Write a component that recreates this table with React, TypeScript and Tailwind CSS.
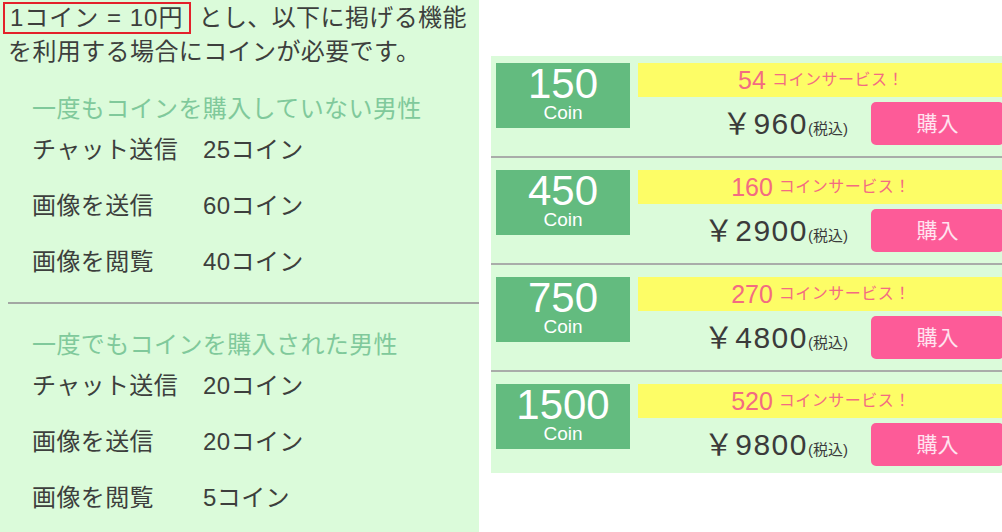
const font = "font-['Liberation_Sans','Noto_Sans_CJK_JP',sans-serif]";

type Cost = { label: string; value: string };

const neverBought: Cost[] = [
  { label: "チャット送信", value: "25コイン" },
  { label: "画像を送信", value: "60コイン" },
  { label: "画像を閲覧", value: "40コイン" },
];

const bought: Cost[] = [
  { label: "チャット送信", value: "20コイン" },
  { label: "画像を送信", value: "20コイン" },
  { label: "画像を閲覧", value: "5コイン" },
];

const plans = [
  { coin: "150", bonus: "54", price: "960" },
  { coin: "450", bonus: "160", price: "2900" },
  { coin: "750", bonus: "270", price: "4800" },
  { coin: "1500", bonus: "520", price: "9800" },
];

function CostRows({ rows }: { rows: Cost[] }) {
  return (
    <div>
      {rows.map((r) => (
        <div key={r.label} className="flex h-[56px] items-center pl-[32px]">
          <span className="w-[171px]">{r.label}</span>
          <span>{r.value}</span>
        </div>
      ))}
    </div>
  );
}

function PlanRow({
  coin,
  bonus,
  price,
  first,
  last,
}: {
  coin: string;
  bonus: string;
  price: string;
  first: boolean;
  last: boolean;
}) {
  return (
    <div
      className={`flex gap-[8px] pl-[5px] ${first ? "pt-[7px]" : "pt-[12px]"} ${
        last ? "pb-[7px]" : "border-b-2 border-[#a9aca9] pb-[11px]"
      }`}
    >
      <div className="flex h-[65px] w-[134px] shrink-0 flex-col items-center bg-[#63bb7f] text-white">
        <span className="mt-[5px] text-[42px] leading-[32px]">{coin}</span>
        <span className="mt-[4px] text-[19px] leading-[18px]">Coin</span>
      </div>
      <div className="flex flex-1 flex-col gap-[5px]">
        <div className="flex h-[34px] items-center justify-center bg-[#fdfd66] text-[#f36b82]">
          <span className="text-[25px] leading-none">{bonus}</span>
          <span className="ml-[6px] text-[16px] leading-none tracking-[0.5px]">
            コインサービス！
          </span>
        </div>
        <div className="flex h-[43px] items-center justify-end gap-[23px]">
          <span className="leading-none text-[#3b3b3b]">
            <span className="text-[30px] tracking-[1.5px]">￥{price}</span>
            <span className="text-[15px]">(税込)</span>
          </span>
          <button
            type="button"
            className="h-[43px] w-[133px] rounded-[5px] bg-[#fd5b98] text-[21px] leading-none text-[#ffe3ef]"
          >
            購入
          </button>
        </div>
      </div>
    </div>
  );
}

export default function App() {
  return (
    <div className={`flex h-[532px] w-[1002px] overflow-hidden bg-white ${font}`}>
      <section className="h-full w-[479px] shrink-0 bg-[#dbfbda] text-[24px] tracking-[0.4px] text-[#3d3f3d]">
        <p className="pl-[3px] pt-[1px] leading-[34px]">
          <span className="inline-block border-2 border-[#e3212b] pl-[5px] pr-[6px] leading-[28px] tracking-[1px]">
            1コイン&nbsp;=&nbsp;10円
          </span>{" "}
          とし、以下に掲げる機能
          <br />
          <span className="pl-[5px]">を利用する場合にコインが必要です。</span>
        </p>

        <h2 className="mt-[27px] pl-[32px] leading-[26px] text-[#80c99b]">
          一度もコインを購入していない男性
        </h2>
        <CostRows rows={neverBought} />

        <hr className="ml-[8px] mt-[12px] border-t-2 border-[#a3a7a3]" />

        <h2 className="mt-[28px] pl-[32px] leading-[26px] text-[#80c99b]">
          一度でもコインを購入された男性
        </h2>
        <CostRows rows={bought} />
      </section>

      <section className="ml-[12px] mt-[56px] self-start">
        <div className="w-[513px] bg-[#dbfbda]">
          {plans.map((p, i) => (
            <PlanRow
              key={p.coin}
              {...p}
              first={i === 0}
              last={i === plans.length - 1}
            />
          ))}
        </div>
      </section>
    </div>
  );
}
